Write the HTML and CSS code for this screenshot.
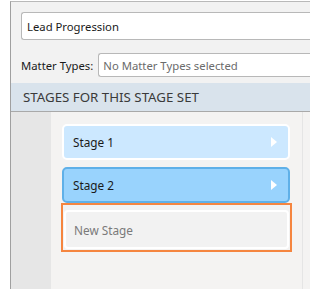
FILE: index.html
```html
<!DOCTYPE html>
<html lang="en">
<head>
    <meta charset="UTF-8">
    <title>Stage Set</title>
    <link rel="stylesheet" href="styles.css">
</head>
<body>
    <div class="panel">
        <div class="props">
            <div class="text-box name-box">Lead Progression</div>
            <div class="field-row">
                <label class="field-label">Matter Types:</label>
                <div class="text-box types-box">No Matter Types selected</div>
            </div>
        </div>

        <div class="section-header">STAGES FOR THIS STAGE SET</div>

        <div class="stages-area">
            <div class="gutter"></div>
            <div class="stage-list">
                <div class="stage-item">
                    <span>Stage 1</span>
                    <span class="arrow"></span>
                </div>
                <div class="stage-item selected">
                    <span>Stage 2</span>
                    <span class="arrow"></span>
                </div>
                <div class="new-stage">
                    <div class="new-stage-input">New Stage</div>
                </div>
            </div>
            <div class="side-strip"></div>
        </div>
    </div>
</body>
</html>
```

FILE: styles.css
```css
* {
    margin: 0;
    padding: 0;
    box-sizing: border-box;
}

body {
    width: 310px;
    height: 289px;
    overflow: hidden;
    background-color: #ffffff;
    font-family: 'Noto Sans', 'Open Sans', Arial, sans-serif;
    font-size: 11.3px;
    color: #1a1a1a;
}

.panel {
    margin: 1px 0 0 10px;
    height: 288px;
    border-left: 1px solid #a0a0a0;
    border-top: 1px solid #b9b9b9;
    display: flex;
    flex-direction: column;
}

.props {
    background-color: #f2f2f2;
    padding: 10px 0 6px 10px;
}

.text-box {
    background-color: #ffffff;
    border: 1px solid #b8b8b8;
    border-right: none;
    border-radius: 3px 0 0 3px;
    display: flex;
    align-items: center;
    white-space: nowrap;
}

.name-box {
    height: 28px;
    padding-left: 5px;
}

.field-row {
    display: flex;
    align-items: center;
    margin-top: 13px;
}

.field-label {
    margin-right: 5px;
    color: #1a1a1a;
}

.types-box {
    flex: 1;
    height: 24px;
    padding-left: 4px;
    color: #6b6b6b;
}

.section-header {
    height: 29px;
    background-color: #d9e3ec;
    border-bottom: 1px solid #a9a9a9;
    padding-left: 12px;
    display: flex;
    align-items: center;
    font-size: 13.3px;
    color: #3a3a3a;
}

.stages-area {
    flex: 1;
    display: flex;
}

.gutter {
    width: 40px;
    background-color: #e6e6e6;
}

.stage-list {
    width: 251px;
    background-color: #f4f3f2;
    padding: 12px 0 0 11px;
}

.side-strip {
    flex: 1;
    background-color: #f4f3f2;
    border-left: 1px solid #e5e5e5;
}

.stage-item {
    width: 228px;
    height: 36px;
    margin-bottom: 7px;
    padding: 0 11px 0 9px;
    background-color: #cce8ff;
    border: 2px solid #ffffff;
    border-radius: 5px;
    display: flex;
    align-items: center;
    justify-content: space-between;
    font-size: 11.8px;
}

.stage-item.selected {
    background-color: #99d3fd;
    border: 2px solid #5fb0e8;
    margin-bottom: 0;
}

.arrow {
    width: 0;
    height: 0;
    border-top: 5px solid transparent;
    border-bottom: 5px solid transparent;
    border-left: 6px solid #ffffff;
}

.new-stage {
    width: 231px;
    height: 49px;
    margin-left: -1px;
    border: 2px solid #f5853f;
    padding: 5px 1px 1px 1px;
    background-color: #f2f2f2;
}

.new-stage-input {
    height: 100%;
    border: 2px solid #ffffff;
    border-radius: 4px;
    padding-left: 8px;
    display: flex;
    align-items: center;
    color: #7a7a7a;
    font-size: 11.8px;
}
```
